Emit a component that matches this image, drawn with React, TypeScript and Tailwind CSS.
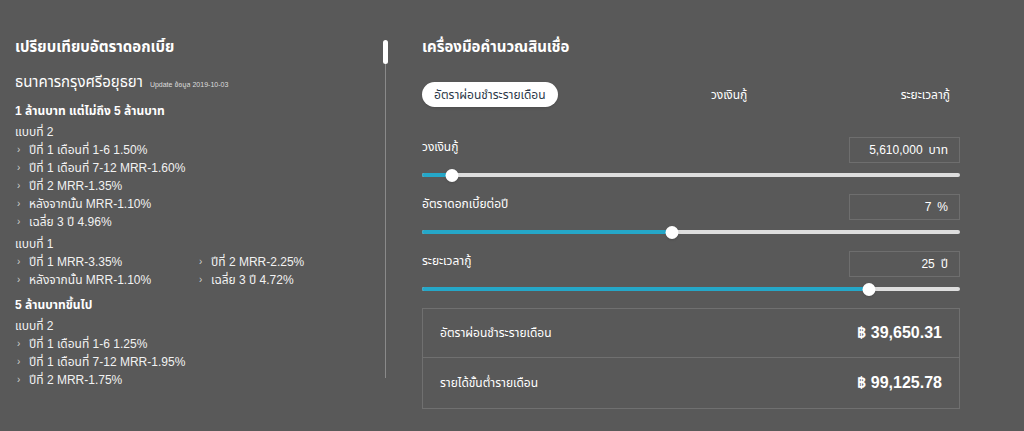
import React from "react";

type Plan = { name: string; items: string[]; twoCol?: boolean };
type Tier = { heading: string; plans: Plan[] };

const tiers: Tier[] = [
  {
    heading: "1 ล้านบาท แต่ไม่ถึง 5 ล้านบาท",
    plans: [
      {
        name: "แบบที่ 2",
        items: [
          "ปีที่ 1 เดือนที่ 1-6 1.50%",
          "ปีที่ 1 เดือนที่ 7-12 MRR-1.60%",
          "ปีที่ 2 MRR-1.35%",
          "หลังจากนั้น MRR-1.10%",
          "เฉลี่ย 3 ปี 4.96%",
        ],
      },
      {
        name: "แบบที่ 1",
        twoCol: true,
        items: ["ปีที่ 1 MRR-3.35%", "ปีที่ 2 MRR-2.25%", "หลังจากนั้น MRR-1.10%", "เฉลี่ย 3 ปี 4.72%"],
      },
    ],
  },
  {
    heading: "5 ล้านบาทขึ้นไป",
    plans: [
      {
        name: "แบบที่ 2",
        items: ["ปีที่ 1 เดือนที่ 1-6 1.25%", "ปีที่ 1 เดือนที่ 7-12 MRR-1.95%", "ปีที่ 2 MRR-1.75%"],
      },
    ],
  },
];

const sliders = [
  { label: "วงเงินกู้", value: "5,610,000", unit: "บาท", pct: 5.5 },
  { label: "อัตราดอกเบี้ยต่อปี", value: "7", unit: "%", pct: 46.4 },
  { label: "ระยะเวลากู้", value: "25", unit: "ปี", pct: 83 },
];

function Item({ text }: { text: string }) {
  return (
    <li className="flex h-[18px] items-center">
      <span className="w-[14px] pl-[2px] text-[10px] text-[#cfcfcf]">›</span>
      <span>{text}</span>
    </li>
  );
}

function RateList() {
  return (
    <div className="text-[12px] text-[#f2f2f2]">
      {tiers.map((tier, ti) => (
        <div key={tier.heading} className={ti > 0 ? "mt-[6px]" : ""}>
          <h3 className="h-[20px] text-[12px] font-bold leading-[20px] text-white">{tier.heading}</h3>
          {tier.plans.map((plan, pi) => (
            <div key={plan.name} className={pi > 0 ? "mt-[4px]" : "mt-[2px]"}>
              <div className="h-[18px] leading-[18px]">{plan.name}</div>
              <ul className={plan.twoCol ? "grid grid-cols-2" : ""}>
                {plan.items.map((it) => (
                  <Item key={it} text={it} />
                ))}
              </ul>
            </div>
          ))}
        </div>
      ))}
    </div>
  );
}

function RangeRow({ label, value, unit, pct }: (typeof sliders)[number]) {
  return (
    <div className="mb-[13px]">
      <div className="flex items-start justify-between">
        <span className="pt-[1px] text-[12px] text-white">{label}</span>
        <div className="flex h-[26px] w-[111px] items-center justify-end gap-[6px] border border-[#6e6e6e] pr-[11px] text-[12px] text-white">
          <span>{value}</span>
          <span>{unit}</span>
        </div>
      </div>
      <div className="relative mt-[6px] h-[12px]">
        <div className="absolute left-0 right-0 top-[4px] h-[4px] rounded-full bg-[#dedede]" />
        <div className="absolute left-0 top-[4px] h-[4px] rounded-full bg-[#25a7c8]" style={{ width: `${pct}%` }} />
        <div
          className="absolute top-[-0.5px] h-[13px] w-[13px] -translate-x-1/2 rounded-full bg-white shadow"
          style={{ left: `${pct}%` }}
        />
      </div>
    </div>
  );
}

export default function App() {
  return (
    <div
      className="flex h-[431px] w-full bg-[#595959] text-white"
      style={{ fontFamily: '"Liberation Sans", "Noto Sans Thai", "Noto Sans", sans-serif' }}
    >
      {/* rates column with its slim scroll rail */}
      <section className="flex w-[390px] pl-[15px] pt-[38px]">
        <div className="h-[354px] flex-1 overflow-hidden">
          <h2 className="text-[15px] font-bold leading-[18px]">เปรียบเทียบอัตราดอกเบี้ย</h2>
          <div className="mt-[15px] flex items-baseline gap-[7px]">
            <span className="text-[15px]">ธนาคารกรุงศรีอยุธยา</span>
            <span className="text-[7px] text-[#dddddd]">Update ข้อมูล 2019-10-03</span>
          </div>
          <div className="mt-[7px]">
            <RateList />
          </div>
        </div>
        <div className="relative ml-[4px] mr-[2px] w-[5px]">
          <div className="absolute left-[2px] top-[24px] h-[316px] w-px bg-[#8a8a8a]" />
          <div className="absolute left-0 top-[2px] h-[24px] w-[5px] rounded-full bg-white" />
        </div>
      </section>

      {/* loan calculator */}
      <section className="ml-[32px] w-[538px] pt-[38px]">
        <h2 className="text-[15px] font-bold leading-[18px]">เครื่องมือคำนวณสินเชื่อ</h2>
        <div className="mt-[26px] flex items-center justify-between pr-[10px] text-[12px]">
          <button className="h-[25px] rounded-full bg-white px-[12px] text-[#2d3a4a] shadow">อัตราผ่อนชำระรายเดือน</button>
          <button>วงเงินกู้</button>
          <button>ระยะเวลากู้</button>
        </div>
        <div className="mt-[30px]">
          {sliders.map((s) => (
            <RangeRow key={s.label} {...s} />
          ))}
        </div>
        <div className="mt-[13px] border border-[#707070]">
          <div className="flex h-[49px] items-center justify-between border-b border-[#707070] pl-[17px] pr-[17px]">
            <span className="text-[12px]">อัตราผ่อนชำระรายเดือน</span>
            <span className="text-[16px] font-bold">฿ 39,650.31</span>
          </div>
          <div className="flex h-[50px] items-center justify-between pl-[17px] pr-[17px]">
            <span className="text-[12px]">รายได้ขั้นต่ำรายเดือน</span>
            <span className="text-[16px] font-bold">฿ 99,125.78</span>
          </div>
        </div>
      </section>
    </div>
  );
}
